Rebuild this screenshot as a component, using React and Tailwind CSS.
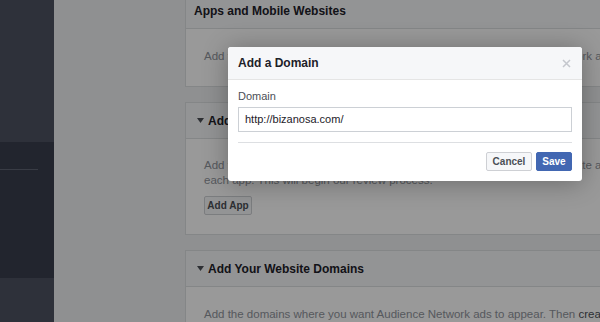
import React from 'react';

const Caret = () => (
    <svg width="7" height="5" viewBox="0 0 7 5" className="mr-[4px] shrink-0">
        <path d="M0 0 L7 0 L3.5 5 Z" fill="#4b4f56" />
    </svg>
);

const PanelHeader = ({ children, caret = true }) => (
    <div className={`h-[36px] flex items-center border-b border-[#dddfe2] bg-[#f6f7f9] ${caret ? 'pl-[11px]' : 'pl-[8px]'}`}>
        {caret && <Caret />}
        <span className="text-[12px] font-bold text-[#1d2129] whitespace-nowrap">{children}</span>
    </div>
);

const DomainModal = () => (
    <div className="absolute left-[228px] top-[47px] w-[354px] bg-white rounded-[3px] shadow-[0_2px_26px_rgba(0,0,0,0.3)] overflow-hidden">
        <div className="h-[33px] flex items-center justify-between px-[10px] bg-[#f6f7f9] border-b border-[#e5e5e5]">
            <span className="text-[12px] font-bold text-[#1d2129]">Add a Domain</span>
            <svg width="9" height="9" viewBox="0 0 9 9" className="mr-[1px]">
                <path d="M1 1 L8 8 M8 1 L1 8" stroke="#c4c7cd" strokeWidth="1.5" />
            </svg>
        </div>
        <div className="px-[10px] pt-[9px] pb-[10px]">
            <div className="text-[11px] leading-[14px] text-[#4b4f56] mb-[4px]">Domain</div>
            <div className="h-[25px] flex items-center border border-[#ccd0d5] pl-[6px] text-[11px] text-[#1d2129]">
                http://bizanosa.com/
            </div>
            <div className="h-px bg-[#dddfe2] mt-[10px]"></div>
            <div className="flex justify-end gap-[4px] mt-[9px]">
                <button className="h-[19px] w-[46px] text-[10px] font-bold text-[#4b4f56] bg-[#f6f7f9] border border-[#ced0d4] rounded-[2px] leading-none">
                    Cancel
                </button>
                <button className="h-[19px] w-[36px] text-[10px] font-bold text-white bg-[#4267b2] border border-[#4267b2] rounded-[2px] leading-none">
                    Save
                </button>
            </div>
        </div>
    </div>
);

export default function App() {
    return (
        <div className="relative w-[600px] h-[322px] overflow-hidden flex bg-[#eef0f2] font-['Liberation_Sans',Arial,sans-serif]">

            {/* Left nav */}
            <div className="w-[54px] shrink-0 flex flex-col bg-[#4d5362]">
                <div className="h-[142px]"></div>
                <div className="h-[136px] bg-[#393f4d] pt-[27px]">
                    <div className="h-px w-[38px] bg-[#5f6574]"></div>
                </div>
            </div>

            {/* Content column */}
            <div className="flex-1 pl-[131px]">
                <div className="w-[480px] -mt-[8px] flex flex-col gap-[15px]">
                    <div className="bg-white border border-[#dddfe2]">
                        <PanelHeader caret={false}>Apps and Mobile Websites</PanelHeader>
                        <div className="pl-[18px] pt-[20px] pb-[23px] text-[11.5px] leading-[14px] text-[#90949c] whitespace-nowrap">
                            Add the Android apps or mobile websites where you want Audience Network ads to appear.
                        </div>
                    </div>

                    <div className="bg-white border border-[#dddfe2]">
                        <PanelHeader>Add Your Apps</PanelHeader>
                        <div className="pl-[18px] pt-[19px] pb-[19px] text-[11.5px] leading-[15px] text-[#90949c]">
                            <div className="whitespace-nowrap">Add the apps where you want Audience Network ads to appear. Then create ad placements for</div>
                            <div className="whitespace-nowrap">each app. This will begin our review process.</div>
                            <button className="mt-[8px] h-[19px] w-[48px] text-[10px] font-bold text-[#4b4f56] bg-[#f6f7f9] border border-[#ced0d4] rounded-[2px] leading-none">
                                Add App
                            </button>
                        </div>
                    </div>

                    <div className="bg-white border border-[#dddfe2]">
                        <PanelHeader>Add Your Website Domains</PanelHeader>
                        <div className="pl-[18px] pt-[20px] pb-[20px] text-[11.5px] leading-[15px] text-[#90949c] whitespace-nowrap">
                            Add the domains where you want Audience Network ads to appear. Then <span className="text-[#4b4f56]">create</span> ad placements.
                        </div>
                    </div>
                </div>
            </div>

            {/* Dim overlay */}
            <div className="absolute inset-0 bg-black/40"></div>

            <DomainModal />
        </div>
    );
}
